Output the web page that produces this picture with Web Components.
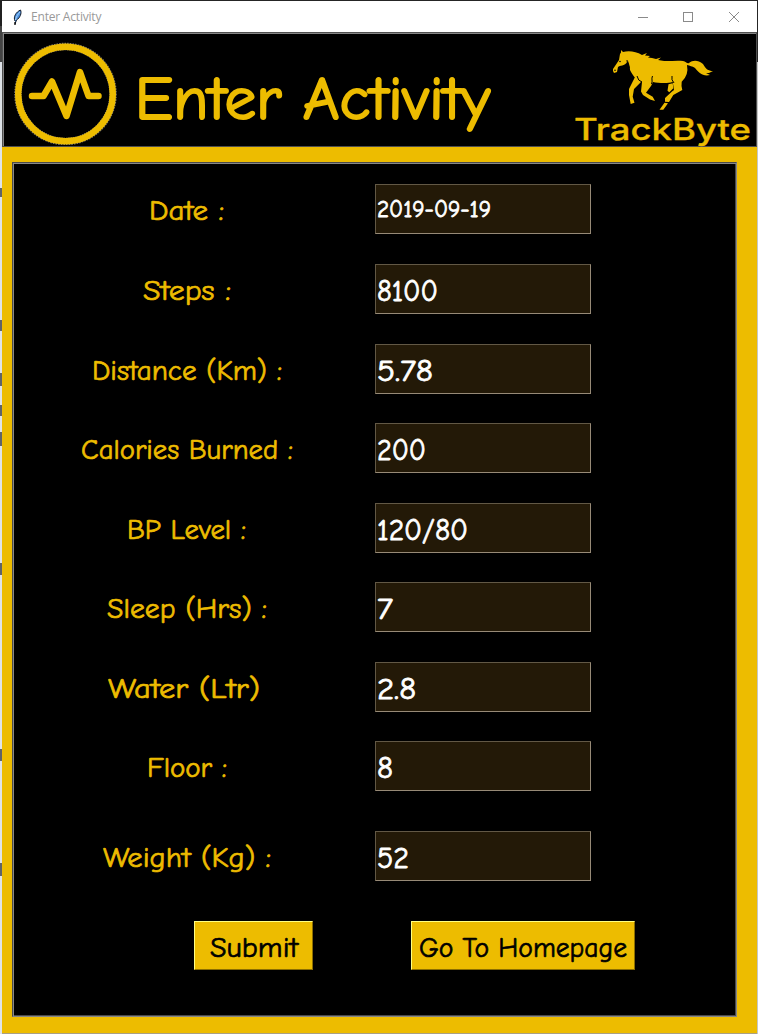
<!DOCTYPE html>
<html lang="en">
<head>
<meta charset="utf-8">
<title>Enter Activity</title>
<style>
html,body{margin:0;height:100%;overflow:hidden}
body{background:#dfe4e9;font-family:"Comic Sans MS","Comic Neue",Lato,sans-serif}
</style>
</head>
<body>
<desktop-backdrop>
<app-window caption="Enter Activity">
<app-header slot="header" heading="Enter Activity"></app-header>
<form-panel>
<form-row label="Date :" w="75" value="2019-09-19" vw="114" small></form-row>
<form-row label="Steps :" w="88" value="8100" vw="61" style="--gap:30px"></form-row>
<form-row label="Distance (Km) :" w="190" value="5.78" vw="56" style="--gap:30px"></form-row>
<form-row label="Calories Burned :" w="212" value="200" vw="49" style="--gap:29px"></form-row>
<form-row label="BP Level :" w="119" value="120/80" vw="91" style="--gap:30px"></form-row>
<form-row label="Sleep (Hrs) :" w="160" value="7" vw="16" style="--gap:29px"></form-row>
<form-row label="Water (Ltr)" w="152" value="2.8" vw="39" dx="-3" style="--gap:30px"></form-row>
<form-row label="Floor :" w="80" value="8" vw="16" style="--gap:29px"></form-row>
<form-row label="Weight (Kg) :" w="168" value="52" vw="32" style="--gap:40px"></form-row>
<push-button slot="actions" label="Submit" w="88" style="width:119px"></push-button>
<push-button slot="actions" label="Go To Homepage" w="208" style="width:224px"></push-button>
</form-panel>
</app-window>
</desktop-backdrop>
<script>
const define=(name,render)=>customElements.define(name,class extends HTMLElement{
  connectedCallback(){
    if(this.shadowRoot)return;
    this.attachShadow({mode:'open'}).innerHTML=render(k=>this.getAttribute(k)||'',this);
  }
});

// One line of text whose advance is fitted to a given width.
define('fit-text',a=>{
  const w=+a('w'),s=+a('size'),h=Math.ceil(s*1.3);
  return `<style>:host{display:block;width:${w}px;height:${h}px}svg{display:block;overflow:visible}text{font-family:${a('face')||'"Comic Sans MS","Comic Neue",Lato,sans-serif'};font-size:${s}px;font-weight:${a('weight')||400};fill:currentColor;stroke:currentColor;stroke-width:${a('stroke')||0};stroke-linejoin:round}</style>
  <svg width="${w}" height="${h}"><text x="0" y="${s}" textLength="${w}" lengthAdjust="spacingAndGlyphs">${a('text')}</text></svg>`;
});

define('desktop-backdrop',()=>`<style>
:host{display:grid;grid-template-columns:2px 755px 1px;height:1034px;box-sizing:border-box;padding-top:1px;background:linear-gradient(#252525 0 62px,#c4c6c6 62px)}
.edge{background:linear-gradient(#202020 0 25px,#444 25px 61px,#dfe4e9 61px)}
.marks{position:relative}.marks i{position:absolute;left:0;width:2px;background:#34383e}
</style><div class="edge marks">${[[188,9],[320,11],[373,13],[405,11],[432,14],[563,12],[749,12],[863,13]].map(([y,h])=>`<i style="top:${y-1}px;height:${h}px;opacity:.75"></i>`).join('')}</div><slot></slot><div></div>`);

define('app-window',a=>`<style>
:host{display:flex;flex-direction:column;height:1032px;background:#edbc00;border-bottom:1px solid #a9a084;position:relative}
.bar{height:31px;background:#fff;display:flex;align-items:center;flex:none;box-sizing:border-box}
.quill{margin-left:9px;width:13px;height:18px;flex:none}
.cap{font:12px "Open Sans","Noto Sans",sans-serif;color:#999;margin-left:7px;flex:1;letter-spacing:-.2px;line-height:30px}
.ctl{display:flex}.ctl svg{width:46px;height:30px;stroke:#8a8a8a;fill:none}
.body{padding:15px 20px 0 10px}
</style>
<div class="bar"><svg class="quill" viewBox="0 0 13 18"><path d="M4 13C2 9 5 4 9.500 2C11 5 9 10 5.500 12L4 16" fill="#4d91df" stroke="#111b2a"/><path d="M4.500 12C5 9 7 6 9 4" stroke="#a9d5fb" fill="none"/><path d="M4 17v-3" stroke="#000" stroke-width="1.300"/></svg>
<span class="cap">${a('caption')}</span>
<div class="ctl"><svg viewBox="0 0 46 30"><path d="M19 15.500h10"/></svg><svg viewBox="0 0 46 30"><rect x="18.500" y="10.500" width="9" height="9"/></svg><svg viewBox="0 0 46 30"><path d="M18 10l10 10m0-10L18 20"/></svg></div></div>
<slot name="header"></slot><div class="body"><slot></slot></div>`);

define('activity-icon',()=>`<style>:host{display:block;width:104px;height:104px}</style>
<svg width="104" height="104" viewBox="0 0 104 104" fill="none"><circle cx="51.500" cy="53" r="47.500" stroke="#77746c" stroke-width="7.600" stroke-dasharray="1.500 1"/><circle cx="51.500" cy="53" r="47.300" stroke="#edbc00" stroke-width="6.400"/><path d="M18 55H29.500L38 40.500L52.500 75L66 31L74.500 55H84.500" stroke="#edbc00" stroke-width="6.500" stroke-linecap="round" stroke-linejoin="round"/></svg>`);

define('brand-mark',()=>`<style>:host{display:flex;flex-direction:column;width:177px;color:#edbc00}svg{margin-left:37px;display:block}fit-text{margin-top:-2px}</style>
<svg width="104" height="64" viewBox="611 48 104 64"><g fill="currentColor">
<path d="M613 71L613 69L619 60L620 54L621 52.500L621 50L623 52C629 50.500 636 51.500 642 55L647 53L645 55.500L650 56L648 57.500L652 58L656 59L661 57.500L658 60L661 60.500C668 62 675 60 683 61C686 61.500 687 64 689 63C693 60 698 60 703 64C706 69 708 71 713 71L709 73L706 73L710 75C703 77 698 72 695 68C692 66 690 66 687 65Q689 75 681.700 81.700Q681 86 682.300 90L673.300 95L669 102L665 101.700V98L672 91.500L674 90L672.700 81.700C668 84 658 83 653 82L651 86L646 92.700L652.700 96.700L655 101L650 99.500L643 95L641 91.500L642 82C637 81 633 76 630 70C630 66 629 64 628 61C624 67 620 65 618 67L617 72L614 73Z"/>
<path d="M636 75L638.300 77L641 82L634 89L632.700 96.700L634.500 102.700L630.700 104L629 95V89L633 81Z"/><path d="M668.500 84.300L672.700 83.300L673.300 88.300L669.300 92.300L667.500 90.700ZM664.500 102.700L668 103.300L663.300 109.700H659.500Z"/></g>
<path d="M652.500 76C651 79 653 81 651.500 84M672 76Q671 80 674 83M627 60C627 64 629 65 629 68M637 76Q638 81 642 82" fill="none" stroke="#000"/><circle cx="620" cy="61.500" r=".8"/><circle cx="615" cy="70.300" r=".8"/></svg>
<fit-text text="TrackByte" w="177" size="29.5" face="Inter,sans-serif" weight="500" stroke=".3" style="height:34px"></fit-text>`);

define('app-header',a=>`<style>
:host{display:flex;height:115px;box-sizing:border-box;background:#000;border:1px solid #505050;box-shadow:inset 1px 1px #858585;color:#edbc00;padding:8px 5px 0 11px;flex:none}
.title{margin:17px 0 0 17px;flex:1}brand-mark{margin-top:7px}
</style><activity-icon></activity-icon><fit-text class="title" text="${a('heading')}" w="355" size="61" stroke="2" style="width:auto"></fit-text><brand-mark></brand-mark>`);

define('form-panel',()=>`<style>
:host{display:flex;flex-direction:column;box-sizing:border-box;width:725px;height:855px;background:#000;border:1px solid #4b4b4b;border-color:#4b4b4b #888 #888 #4b4b4b;box-shadow:inset 1px 1px #888,inset -1px -1px #4b4b4b;padding:21px 0 0 1px}
.actions{display:flex;gap:98px;margin:40px 0 0 180px}
</style><slot></slot><div class="actions"><slot name="actions"></slot></div>`);

define('form-row',(a,el)=>`<style>
:host{display:grid;grid-template-columns:346px 216px;column-gap:15px;height:50px;margin-top:var(--gap,0)}
.label{color:#edbc00;display:flex;justify-content:center;padding-top:7px}
.label fit-text{position:relative;left:${+a('dx')-.5}px}
.field{box-sizing:border-box;background:#231907;border:1px solid;border-color:#625845 #978a77 #978a77 #625845;color:#fff;padding:${el.hasAttribute('small')?'8px':'6px'} 0 0 1px;overflow:hidden}
</style><div class="label"><fit-text text="${a('label')}" w="${a('w')}" size="29" stroke=".7"></fit-text></div>
<div class="field"><fit-text text="${a('value')}" w="${a('vw')}" size="${el.hasAttribute('small')?24:30}" stroke=".8"></fit-text></div>`);

define('push-button',a=>`<style>
:host{display:flex;justify-content:center;box-sizing:border-box;height:49px;background:#edbc00;border:1px solid;border-color:#ffff83 #8c6e00 #8c6e00 #ffff83;color:#000;padding-top:6px}
</style><fit-text text="${a('label')}" w="${a('w')}" size="29" stroke=".7"></fit-text>`);
</script>
</body>
</html>
